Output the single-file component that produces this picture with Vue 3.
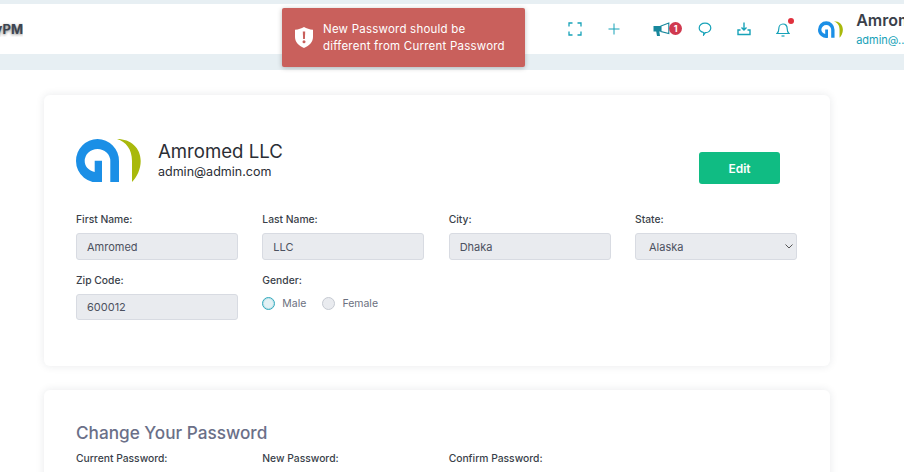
<script setup>
const row1 = [
  { label: 'First Name:', value: 'Amromed' },
  { label: 'Last Name:', value: 'LLC' },
  { label: 'City:', value: 'Dhaka' }
]
</script>

<template>
  <div class="page">
    <header class="topbar">
      <div class="brand">yPM</div>
      <div class="spacer"></div>
      <div class="tools">
        <span class="cell">
          <svg width="14" height="14" viewBox="0 0 14 14" fill="none" stroke="#17a2b8" stroke-width="1.300"><path d="M1 4.500V1h3.500M9.500 1H13v3.500M13 9.500V13H9.500M4.500 13H1V9.500"/></svg>
        </span>
        <span class="cell">
          <svg width="14" height="14" viewBox="0 0 14 14" fill="none" stroke="#17a2b8" stroke-width="1"><path d="M7 1.500v11M1.500 7h11"/></svg>
        </span>
        <span class="cell wide">
          <svg class="mega" width="17" height="15" viewBox="0 0 17 15"><path d="M.5 4h7.500v5.500H6.300L7 14H4L3.200 9.500H.5z" fill="#17879c"/><path d="M8 4l7.800-3v10.500L8 9.500z" fill="#fff" stroke="#17879c" stroke-width="1.100"/></svg>
          <span class="badge">1</span>
        </span>
        <span class="cell">
          <svg width="14" height="14" viewBox="0 0 14 14" fill="none" stroke="#17a2b8" stroke-width="1.200"><path d="M7 1.200c3.300 0 5.800 2 5.800 4.800 0 2.700-2.500 4.700-5.400 4.700L5.600 13l.2-2.500C3.200 10 1.200 8.400 1.200 6 1.200 3.200 3.700 1.200 7 1.200z"/></svg>
        </span>
        <span class="cell">
          <svg width="14" height="14" viewBox="0 0 14 14" fill="none" stroke="#17a2b8" stroke-width="1.400"><path d="M3.500 8H1v4.500h12V8h-2.500"/><path d="M7 .5v7M4.500 5.500 7 8l2.500-2.500"/></svg>
        </span>
        <span class="cell bell">
          <svg width="14" height="16" viewBox="0 0 14 16" fill="none" stroke="#17a2b8" stroke-width="1.200"><path d="M1 12.500c1.300-1 1.800-2.300 1.800-4.800C2.800 5 4.500 3 7 3s4.200 2 4.200 4.700c0 2.500.5 3.800 1.800 4.800z"/><path d="M5.500 15h3"/></svg>
          <i class="dot"></i>
        </span>
      </div>
      <svg class="user-logo" viewBox="0 0 65 43"><path d="M43 43V22A21.500 22 0 0 0 0 22a21.500 21.500 0 0 0 26 21V21.700h-7.300V33C12 31 8.700 27 8.700 22a12.800 12 0 0 1 25.600 0v21z" fill="#1b8fe6"/><path d="M41 0c14 0 23.700 9 23.700 22 0 8-3.700 16-8.700 21V22C56 10 50 3 41 0z" fill="#a9b90c"/></svg>
      <div class="user">
        <div class="user-name">Amromed LLC</div>
        <div class="user-mail">admin@...</div>
      </div>
    </header>
    <div class="band"></div>

    <div class="toast">
      <svg width="18" height="21" viewBox="0 0 18 21"><path d="M9 0c2.500 1.500 5.500 2.500 9 2.700V10c0 5-3.500 8.800-9 11-5.500-2.200-9-6-9-11V2.700C3.500 2.500 6.500 1.500 9 0z" fill="#fff"/><path d="M7.800 4.500h2.400l-.3 7.500H8.100z" fill="#c9605c"/><circle cx="9" cy="14.800" r="1.500" fill="#c9605c"/></svg>
      <p>New Password should be<br>different from Current Password</p>
    </div>

    <main class="content">
      <section class="card profile">
        <div class="head">
          <svg class="logo" viewBox="0 0 65 43"><path d="M43 43V22A21.500 22 0 0 0 0 22a21.500 21.500 0 0 0 26 21V21.700h-7.300V33C12 31 8.700 27 8.700 22a12.800 12 0 0 1 25.600 0v21z" fill="#1b8fe6"/><path d="M41 0c14 0 23.700 9 23.700 22 0 8-3.700 16-8.700 21V22C56 10 50 3 41 0z" fill="#a9b90c"/></svg>
          <div class="who">
            <h2>Amromed LLC</h2>
            <div class="mail">admin@admin.com</div>
          </div>
          <button class="edit">Edit</button>
        </div>
        <div class="grid">
          <div v-for="f in row1" :key="f.label" class="field">
            <label>{{ f.label }}</label>
            <div class="input">{{ f.value }}</div>
          </div>
          <div class="field">
            <label>State:</label>
            <div class="input select">
              Alaska
              <svg width="8" height="5" viewBox="0 0 8 5" fill="none" stroke="#555" stroke-width="1"><path d="M.5.500 4 4 7.500.500"/></svg>
            </div>
          </div>
          <div class="field">
            <label>Zip Code:</label>
            <div class="input short">600012</div>
          </div>
          <div class="field">
            <label>Gender:</label>
            <div class="radios">
              <span class="radio on"></span><span class="rlabel">Male</span>
              <span class="radio"></span><span class="rlabel">Female</span>
            </div>
          </div>
        </div>
      </section>

      <section class="card password">
        <h3>Change Your Password</h3>
        <div class="grid">
          <label>Current Password:</label>
          <label>New Password:</label>
          <label>Confirm Password:</label>
        </div>
      </section>
    </main>
  </div>
</template>

<style>
html, body { margin: 0; background: #fff; overflow: hidden; }
</style>

<style scoped>
.page { width: 904px; height: 472px; overflow: hidden; position: relative; font-family: Inter, "Noto Sans", sans-serif; background: #fff; }
.topbar { margin-top: 4px; height: 50px; background: #fff; display: flex; align-items: center; box-shadow: 0 -4px 0 #e7eff3; }
.topbar > * { flex-shrink: 0; }
.brand { width: 23px; overflow: hidden; display: flex; justify-content: flex-end; font-size: 13px; font-weight: 700; color: #3c4450; text-shadow: 0 1px 3px rgba(0,0,0,.5); }
.spacer { width: 532.500px; }
.tools { display: flex; align-items: center; }
.cell { width: 39.330px; height: 24px; display: flex; align-items: center; justify-content: center; position: relative; }
.wide { width: 51px; }
.mega { margin-left: 3px; }
.badge { position: absolute; left: 35px; top: 5px; width: 13px; height: 13px; border-radius: 50%; background: #d0394f; color: #fff; font-size: 9px; font-weight: 700; line-height: 13px; text-align: center; }
.dot { position: absolute; left: 24px; top: 1px; width: 6px; height: 6px; border-radius: 50%; background: #e0303d; }
.user-logo { width: 25px; height: 17px; margin-left: 15px; }
.user { margin-left: 13px; white-space: nowrap; }
.user-name { font-size: 16px; font-weight: 600; color: #3a3f4a; line-height: 20px; }
.user-mail { font-size: 11px; color: #17a2b8; line-height: 15px; margin-top: 3px; }
.band { height: 16px; background: #e7eff3; }
.toast { position: absolute; left: 282px; top: 8px; width: 243px; height: 59px; box-sizing: border-box; padding-left: 13px; display: flex; align-items: center; gap: 10px; background: #c9605c; border-radius: 2px; color: #fff; box-shadow: 0 1px 5px rgba(0,0,0,.25); }
.toast p { margin: 0; font-size: 11.500px; line-height: 17px; white-space: nowrap; letter-spacing: .22px; }
.content { padding: 25px 0 0 44px; }
.card { width: 786px; box-sizing: border-box; background: #fff; border-radius: 6px; box-shadow: 0 0 8px rgba(30,40,60,.1); padding-left: 32px; padding-right: 33px; }
.profile { height: 271px; padding-top: 44px; }
.head { display: flex; align-items: center; height: 43px; margin-bottom: 30px; }
.logo { width: 65px; height: 43px; flex-shrink: 0; }
.who { margin-left: 17px; margin-top: -3px; }
h2 { margin: 0; font-size: 18.600px; font-weight: 400; color: #2b2e35; line-height: 24px; }
.mail { font-size: 12.500px; color: #2b2e35; line-height: 16px; margin-top: 1px; }
.edit { margin-left: auto; margin-right: 17px; margin-top: 15px; width: 81px; height: 32px; border: 0; border-radius: 3px; background: #10bc83; color: #fff; font: 600 12px Inter, sans-serif; }
.grid { display: grid; grid-template-columns: repeat(4, 162px); column-gap: 24.330px; row-gap: 13px; }
.field { display: flex; flex-direction: column; }
label { font-size: 10.300px; font-weight: 500; color: #3a3f4a; line-height: 14px; height: 14px; white-space: nowrap; }
.input { margin-top: 7px; height: 27px; box-sizing: border-box; padding-left: 10px; background: #e9ebef; border: 1px solid #d8dbe2; border-radius: 3px; font-size: 11px; color: #4c5160; display: flex; align-items: center; }
.short { height: 26px; }
.select { padding-left: 13px; padding-right: 3px; justify-content: space-between; }
.radios { margin-top: 9px; display: flex; align-items: center; height: 14px; }
.radio { width: 13px; height: 13px; box-sizing: border-box; border-radius: 50%; background: #e9ebef; border: 1px solid #c6cad2; }
.radio.on { background: #e3f1f4; border-color: #30a9bd; box-shadow: inset 0 0 0 1px #bfe2e8; }
.rlabel { margin-left: 7px; margin-right: 16px; font-size: 10.500px; color: #6b7080; }
.password { margin-top: 24px; height: 120px; padding-top: 33px; }
h3 { margin: 0 0 8px; font-size: 17.200px; font-weight: 500; color: #6b7088; line-height: 20px; }
</style>
